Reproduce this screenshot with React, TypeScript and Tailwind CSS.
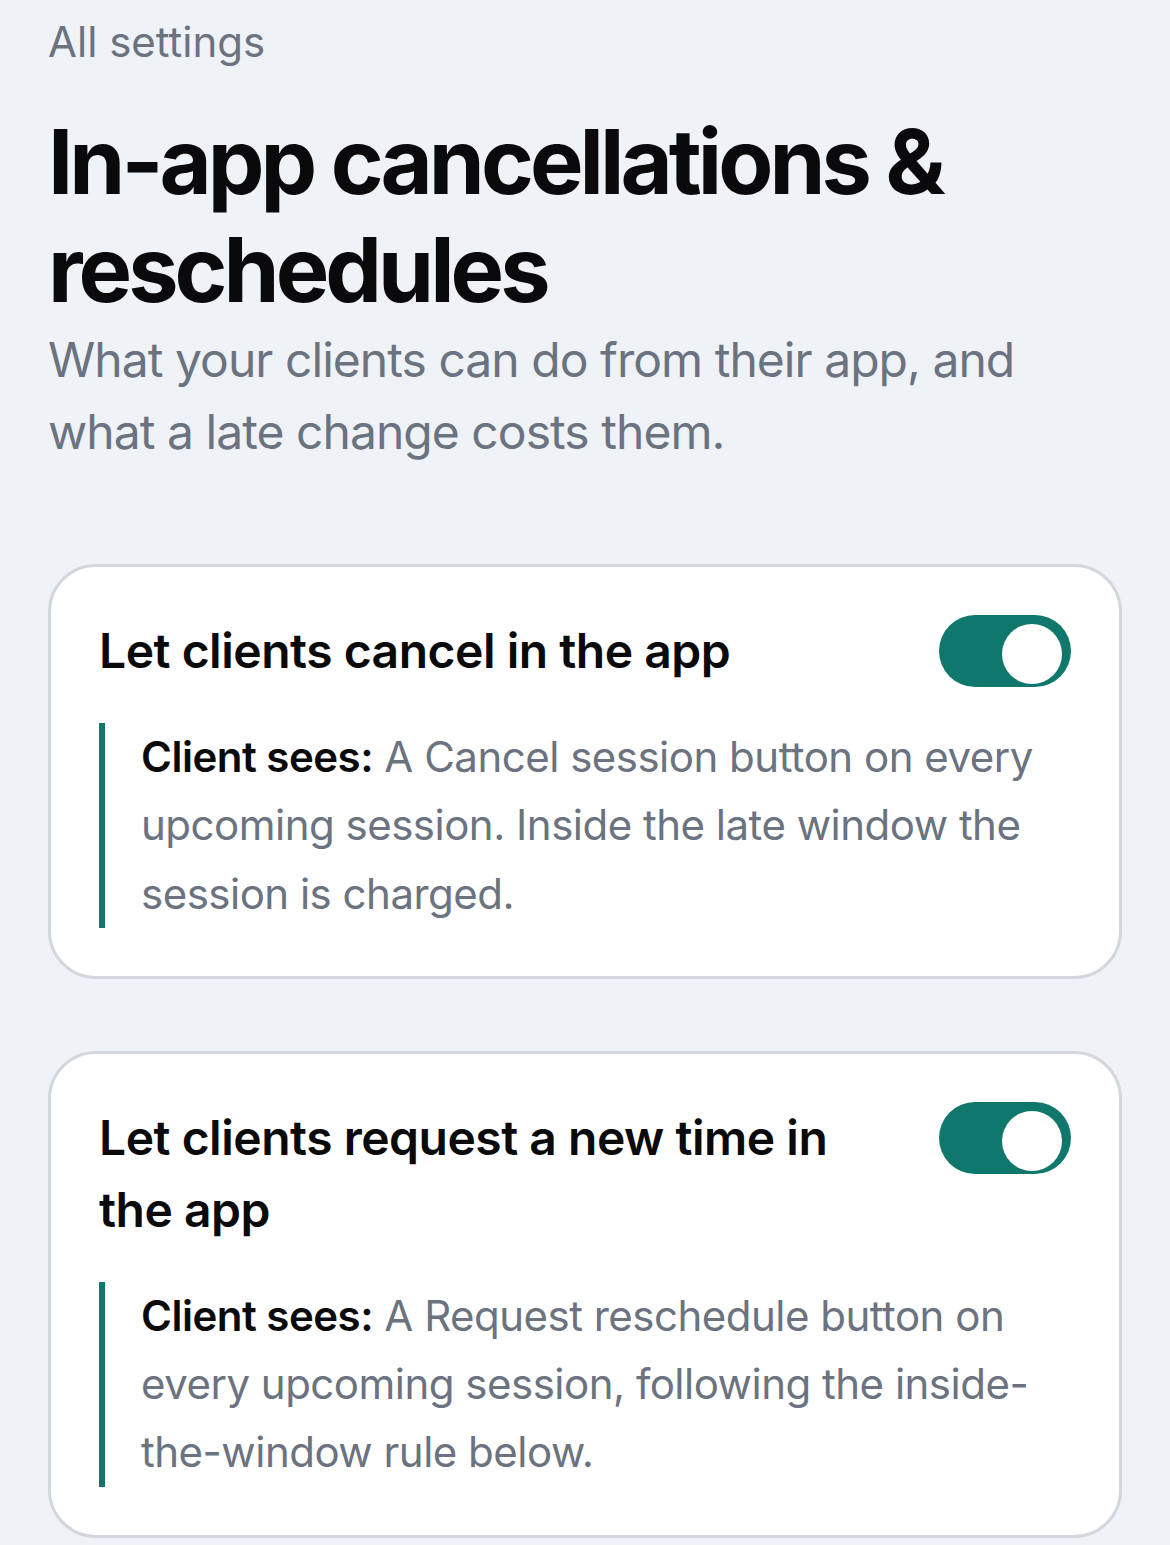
import { useState } from 'react';

type Setting = {
  id: string;
  title: string;
  detail: string;
};

const settings: Setting[] = [
  {
    id: 'cancel',
    title: 'Let clients cancel in the app',
    detail:
      'A Cancel session button on every upcoming session. Inside the late window the session is charged.',
  },
  {
    id: 'reschedule',
    title: 'Let clients request a new time in the app',
    detail:
      'A Request reschedule button on every upcoming session, following the inside-the-window rule below.',
  },
];

function Toggle({ on, onChange }: { on: boolean; onChange: () => void }) {
  return (
    <button
      type="button"
      role="switch"
      aria-checked={on}
      onClick={onChange}
      className={
        on
          ? 'relative h-[72px] w-[132px] shrink-0 rounded-full bg-[#0f776b]'
          : 'relative h-[72px] w-[132px] shrink-0 rounded-full bg-gray-300'
      }
    >
      <span
        className={
          on
            ? 'absolute top-[9px] left-[63px] h-[60px] w-[60px] rounded-full bg-white'
            : 'absolute top-[9px] left-[9px] h-[60px] w-[60px] rounded-full bg-white'
        }
      />
    </button>
  );
}

function SettingCard({ setting }: { setting: Setting }) {
  const [on, setOn] = useState(true);

  return (
    <section className="rounded-[48px] border-[3px] border-[#d3d6dc] bg-white p-12">
      <div className="flex items-start justify-between gap-12">
        <h2 className="text-[48px] leading-[72px] font-semibold tracking-[-0.01em] text-[#0a0a0c]">
          {setting.title}
        </h2>
        <Toggle on={on} onChange={() => setOn(!on)} />
      </div>
      <p className="mt-9 border-l-[6px] border-[#0f776b] pl-9 text-[42px] leading-[68.25px] tracking-[-0.012em] text-[#6b7280]">
        <span className="font-semibold text-[#0a0a0c]">Client sees:</span>{' '}
        {setting.detail}
      </p>
    </section>
  );
}

export default function App() {
  return (
    <main
      className="min-h-screen bg-[#eff2f7] px-12 pt-3 pb-24"
      style={{ fontFamily: 'Inter, "Noto Sans", sans-serif' }}
    >
      <a href="#" className="block text-[42px] leading-[60px] text-[#6b7280]">
        All settings
      </a>
      <h1 className="mt-9 text-[90px] leading-[108px] font-bold tracking-[-0.044em] text-[#0a0a0c]">
        In-app cancellations &amp; reschedules
      </h1>
      <p className="text-[48px] leading-[72px] tracking-[-0.02em] text-[#6b7280]">
        What your clients can do from their app, and what a late change costs
        them.
      </p>
      <div className="mt-24 flex flex-col gap-[72px]">
        {settings.map((s) => (
          <SettingCard key={s.id} setting={s} />
        ))}
      </div>
    </main>
  );
}
